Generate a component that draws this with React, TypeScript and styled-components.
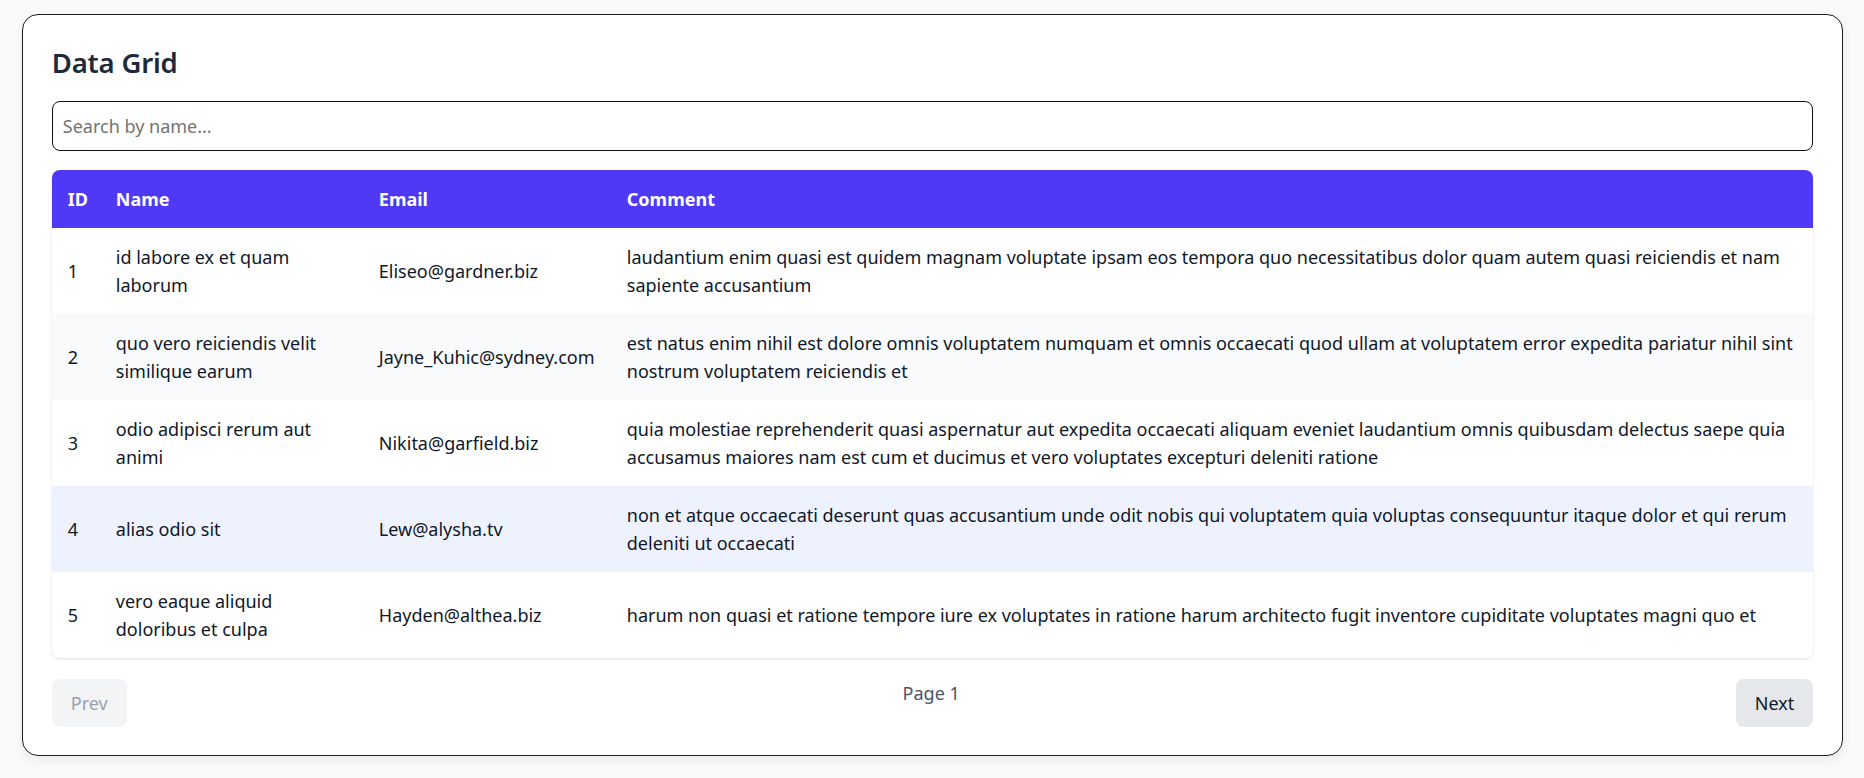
import React from "react";
import styled, { createGlobalStyle } from "styled-components";

const GlobalStyle = createGlobalStyle`
  html, body {
    margin: 0;
    padding: 0;
    background: #f9fafb;
    font-family: "Noto Sans", "Open Sans", sans-serif;
    font-size: 18px;
    color: #101828;
  }
  * { box-sizing: border-box; }
`;

const Page = styled.div`
  padding: 14px 21px 22px 22px;
  min-height: 100vh;
`;

const Card = styled.section`
  background: #ffffff;
  border: 1px solid #1f1f1f;
  border-radius: 16px;
  padding: 28px 28.8px;
  box-shadow: 0 4px 12px rgba(15, 23, 42, 0.07);
  display: flex;
  flex-direction: column;
`;

const Title = styled.h1`
  margin: 0 0 18px;
  font-size: 27.5px;
  line-height: 40px;
  font-weight: 600;
  color: #1e2939;
  letter-spacing: -0.2px;
`;

const SearchInput = styled.input`
  display: block;
  width: 100%;
  height: 50px;
  margin: 0 0 19px;
  padding: 11px 10px;
  border: 1px solid #111;
  border-radius: 8px;
  font-family: inherit;
  font-size: 18px;
  line-height: 26px;
  color: #101828;
  background: #fff;
  outline: none;
  &::placeholder {
    color: #737373;
  }
`;

const TableWrap = styled.div`
  border-radius: 8px;
  overflow: hidden;
  box-shadow: 0 1px 3px rgba(0, 0, 0, 0.08), 0 1px 2px rgba(0, 0, 0, 0.05);
`;

const Table = styled.table`
  width: 100%;
  border-collapse: collapse;
  table-layout: fixed;
`;

const HeadRow = styled.tr`
  background: #4f39f6;
`;

const HeadCell = styled.th`
  padding: 15px 16px;
  text-align: left;
  font-size: 18px;
  line-height: 28px;
  font-weight: 700;
  color: #ffffff;
`;

const BodyRow = styled.tr<{ $tone: "plain" | "striped" | "active" }>`
  background: ${(p) =>
    p.$tone === "active" ? "#eef2ff" : p.$tone === "striped" ? "#f9fafb" : "#ffffff"};
`;

const Cell = styled.td<{ $nowrap?: boolean }>`
  padding: 15px 16px;
  font-size: 18px;
  line-height: 28px;
  color: #101828;
  vertical-align: middle;
  white-space: ${(p) => (p.$nowrap ? "nowrap" : "normal")};
`;

const Pager = styled.div`
  display: flex;
  justify-content: space-between;
  margin-top: 21px;
`;

const PageButton = styled.button`
  height: 48px;
  padding: 0 19px;
  border: none;
  border-radius: 8px;
  font-family: inherit;
  font-size: 18px;
  line-height: 28px;
  background: #e5e7eb;
  color: #101828;
  cursor: pointer;
  &:disabled {
    background: #f3f4f6;
    color: #99a1af;
    cursor: not-allowed;
  }
`;

const PageLabel = styled.span`
  font-size: 18px;
  line-height: 28px;
  color: #4a5565;
`;

type Comment = { id: number; name: string; email: string; body: string };

const rows: Comment[] = [
  {
    id: 1,
    name: "id labore ex et quam laborum",
    email: "Eliseo@gardner.biz",
    body: "laudantium enim quasi est quidem magnam voluptate ipsam eos tempora quo necessitatibus dolor quam autem quasi reiciendis et nam sapiente accusantium",
  },
  {
    id: 2,
    name: "quo vero reiciendis velit similique earum",
    email: "Jayne_Kuhic@sydney.com",
    body: "est natus enim nihil est dolore omnis voluptatem numquam et omnis occaecati quod ullam at voluptatem error expedita pariatur nihil sint nostrum voluptatem reiciendis et",
  },
  {
    id: 3,
    name: "odio adipisci rerum aut animi",
    email: "Nikita@garfield.biz",
    body: "quia molestiae reprehenderit quasi aspernatur aut expedita occaecati aliquam eveniet laudantium omnis quibusdam delectus saepe quia accusamus maiores nam est cum et ducimus et vero voluptates excepturi deleniti ratione",
  },
  {
    id: 4,
    name: "alias odio sit",
    email: "Lew@alysha.tv",
    body: "non et atque occaecati deserunt quas accusantium unde odit nobis qui voluptatem quia voluptas consequuntur itaque dolor et qui rerum deleniti ut occaecati",
  },
  {
    id: 5,
    name: "vero eaque aliquid doloribus et culpa",
    email: "Hayden@althea.biz",
    body: "harum non quasi et ratione tempore iure ex voluptates in ratione harum architecto fugit inventore cupiditate voluptates magni quo et",
  },
];

export default function App() {
  return (
    <Page>
      <GlobalStyle />
      <Card>
        <Title>Data Grid</Title>
        <SearchInput type="text" placeholder="Search by name..." />
        <TableWrap>
          <Table>
            <colgroup>
              <col style={{ width: 48 }} />
              <col style={{ width: 263 }} />
              <col style={{ width: 248 }} />
              <col />
            </colgroup>
            <thead>
              <HeadRow>
                <HeadCell>ID</HeadCell>
                <HeadCell>Name</HeadCell>
                <HeadCell>Email</HeadCell>
                <HeadCell>Comment</HeadCell>
              </HeadRow>
            </thead>
            <tbody>
              {rows.map((r, i) => (
                <BodyRow
                  key={r.id}
                  $tone={r.id === 4 ? "active" : i % 2 === 1 ? "striped" : "plain"}
                >
                  <Cell>{r.id}</Cell>
                  <Cell>{r.name}</Cell>
                  <Cell $nowrap>{r.email}</Cell>
                  <Cell>{r.body}</Cell>
                </BodyRow>
              ))}
            </tbody>
          </Table>
        </TableWrap>
        <Pager>
          <PageButton disabled>Prev</PageButton>
          <PageLabel>Page 1</PageLabel>
          <PageButton>Next</PageButton>
        </Pager>
      </Card>
    </Page>
  );
}
